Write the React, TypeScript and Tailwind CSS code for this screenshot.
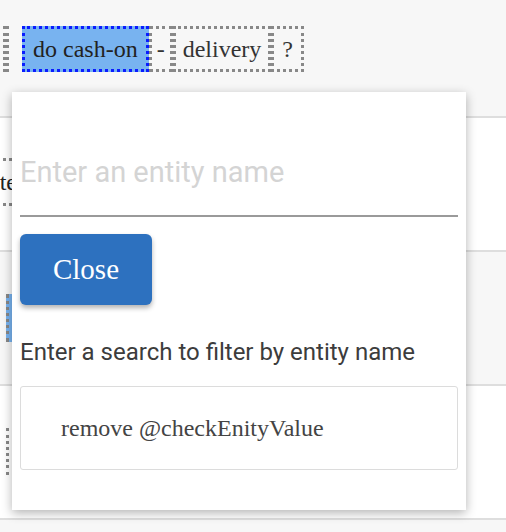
import React from "react";

type Token = { text: string; selected?: boolean; pad: string };

const firstRow: Token[] = [
  { text: "do cash-on", selected: true, pad: "px-2" },
  { text: "-", pad: "px-[5px]" },
  { text: "delivery", pad: "px-[7px]" },
  { text: "?", pad: "px-2" },
];

function TokenBox({ text, selected, pad }: Token) {
  return (
    <span
      className={
        (selected
          ? "border-[3px] border-dotted border-[#0a1cff] bg-[#78b3f0] leading-[40px] text-[#222] "
          : "border-[3px] border-dotted border-[#888] leading-[40px] text-[#333] ") + pad
      }
    >
      {text}
    </span>
  );
}

export default function App() {
  return (
    <div className="relative h-[532px] w-[506px] overflow-hidden bg-[#f7f7f7] font-['Liberation_Serif',serif] text-[24px]">
      {/* utterance rows */}
      <div className="flex h-[118px] items-start border-b-2 border-[#dedede] bg-[#f7f7f7] pt-[26px]">
        <span className="ml-[3px] h-[46px] w-[6px] border-x-[3px] border-dotted border-[#888]" />
        <div className="ml-[13px] flex">
          {firstRow.map((t) => (
            <TokenBox key={t.text} {...t} />
          ))}
        </div>
      </div>
      <div className="flex h-[134px] items-start border-b-2 border-[#dedede] bg-white pt-[40px]">
        <span className="-ml-[34px] border-[3px] border-dotted border-[#888] px-2 leading-[42px] text-[#222]">
          enter
        </span>
      </div>
      <div className="flex h-[134px] items-start border-b-2 border-[#dedede] bg-[#f7f7f7] pt-[42px]">
        <span className="ml-[6px] h-[48px] w-[20px] border-l-[3px] border-dotted border-[#888] bg-[#78b3f0]" />
      </div>
      <div className="flex h-[134px] items-start border-b-2 border-[#dedede] bg-white pt-[42px]">
        <span className="ml-[6px] h-[47px] w-[20px] border-l-[3px] border-dotted border-[#888]" />
      </div>
      <div className="h-[20px] bg-[#f7f7f7]" />

      {/* entity picker popover */}
      <div className="absolute left-[12px] top-[92px] flex h-[418px] w-[454px] flex-col bg-white px-2 pt-[36px] font-['Roboto',sans-serif] shadow-[0_3px_10px_rgba(0,0,0,0.3)]">
        <input
          className="h-[89px] w-full border-b-2 border-[#9a9a9a] bg-transparent text-[29px] text-[#333] outline-none placeholder:text-[#d4d4d4]"
          placeholder="Enter an entity name"
        />
        <button className="mt-[17px] h-[71px] w-[132px] rounded-md bg-[#2d71bf] font-['Liberation_Serif',serif] text-[29px] text-white shadow-[0_3px_5px_rgba(0,0,0,0.3)]">
          Close
        </button>
        <div className="mt-[33px] text-[24px] leading-[28px] text-[#3c3c3c]">
          Enter a search to filter by entity name
        </div>
        <div className="mt-[20px] flex h-[84px] items-center rounded-[3px] border border-[#dcdcdc] pl-[40px] font-['Liberation_Serif',serif] text-[24px] text-[#444]">
          remove @checkEnityValue
        </div>
      </div>
    </div>
  );
}
